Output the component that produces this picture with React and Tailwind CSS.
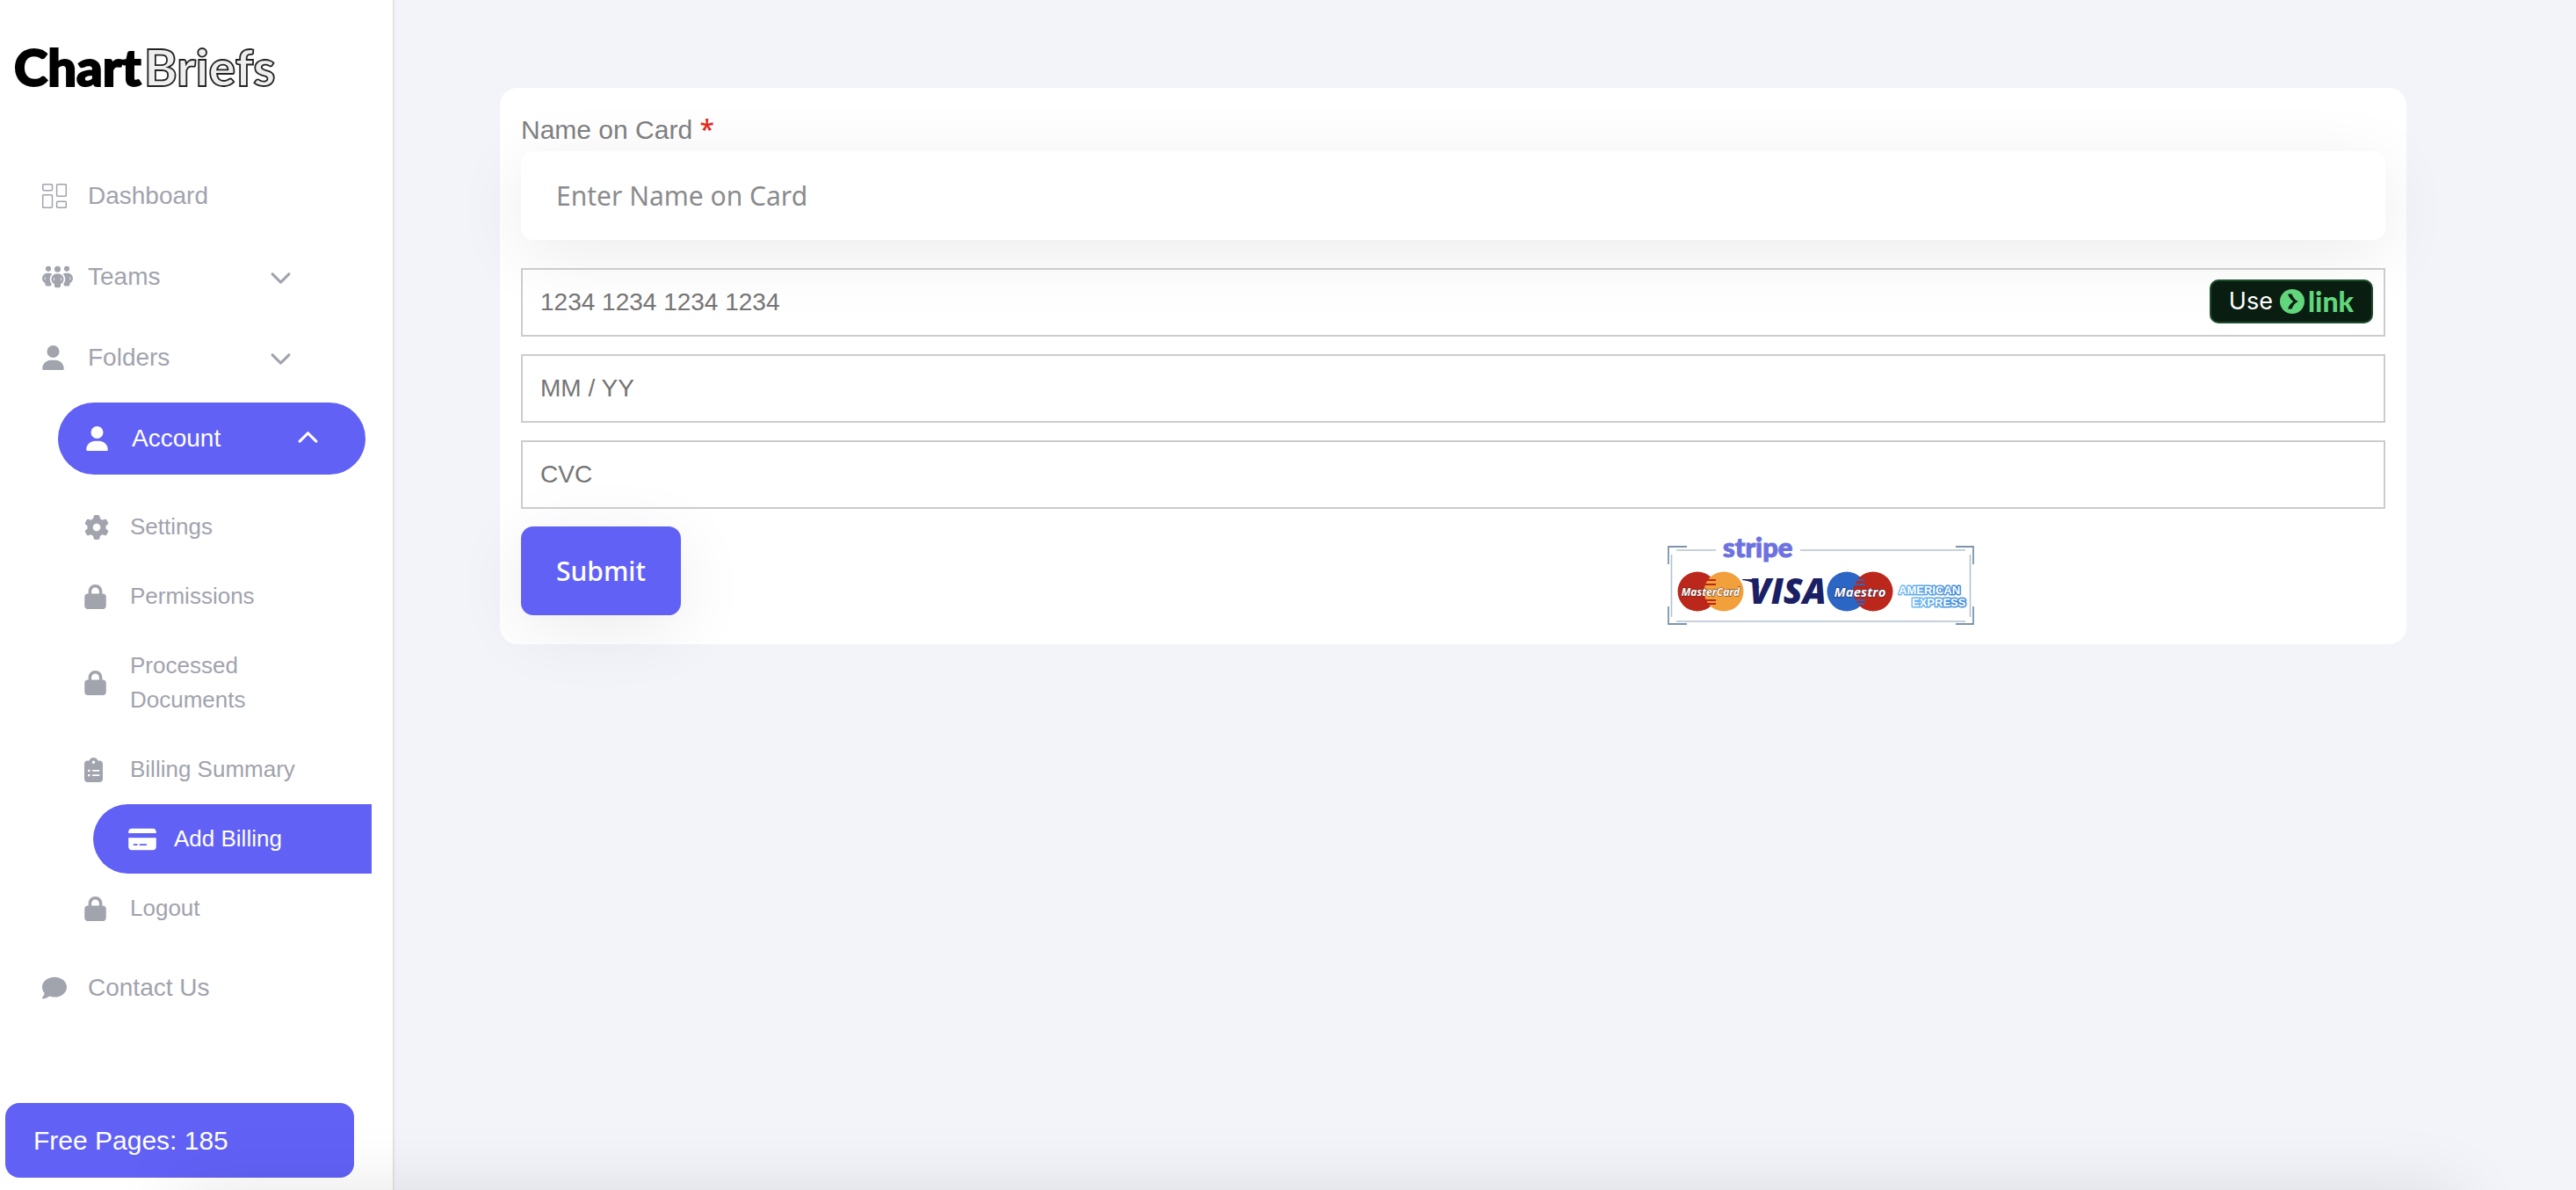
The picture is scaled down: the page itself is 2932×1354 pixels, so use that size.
import React, { useState } from 'react';
import {
  FaPeopleGroup, FaUser, FaGear, FaLock, FaClipboardList,
  FaCreditCard, FaComment, FaChevronDown, FaChevronUp,
} from 'react-icons/fa6';

const DashboardIcon = ({ className }) => (
  <svg viewBox="0 0 28 28" fill="none" stroke="currentColor" strokeWidth="1.5" className={className}>
    <rect x="0.7" y="0.7" width="10.8" height="7" rx="1.2" />
    <rect x="0.7" y="12.7" width="10.8" height="14.6" rx="1.2" />
    <rect x="16.6" y="0.7" width="10.7" height="13.6" rx="1.2" />
    <rect x="16.6" y="20.3" width="10.7" height="7" rx="1.2" />
  </svg>
);

const ACCOUNT_LINKS = [
  { label: 'Settings',            icon: FaGear,          size: 'w-7' },
  { label: 'Permissions',         icon: FaLock,          size: 'w-[25px]' },
  { label: 'Processed Documents', icon: FaLock,          size: 'w-[25px]' },
  { label: 'Billing Summary',     icon: FaClipboardList, size: 'w-[21px]' },
  { label: 'Add Billing',         icon: FaCreditCard,    size: 'w-8', active: true },
  { label: 'Logout',              icon: FaLock,          size: 'w-[25px]' },
];

function Logo() {
  return (
    <svg viewBox="0 0 310 60" className="w-[310px] h-[60px] overflow-visible" role="img" aria-label="ChartBriefs">
      <g fontFamily="Lato, sans-serif" fontWeight="900" fontSize="57">
        <text x="0" y="50" fontSize="58" fill="#000" stroke="#000" strokeWidth="2">Chart</text>
        <text x="148" y="50" fill="#eee" stroke="#222" strokeWidth="1.8">Briefs</text>
      </g>
    </svg>
  );
}

function NavItem({ icon: Icon, size, label, chevron }) {
  return (
    <a href="#" className="flex items-center h-[82px] pl-12 pr-[115px] text-[28px] text-[#a1a3ad]">
      <span className="w-[52px] shrink-0"><Icon className={`h-7 ${size}`} /></span>
      <span className="grow">{label}</span>
      {chevron && <FaChevronDown className="h-7 w-[25px]" />}
    </a>
  );
}

function SubItem({ icon: Icon, size, label, active }) {
  return (
    <li>
      <a
        href="#"
        className={`flex items-center py-5 text-[26px] leading-[39px] ${
          active
            ? 'ml-[106px] mr-6 pl-10 rounded-l-full bg-[#6161f6] text-white'
            : 'pl-24 pr-[90px] text-[#a1a3ad]'
        }`}
      >
        <span className="w-[52px] shrink-0"><Icon className={`h-7 ${size}`} /></span>
        <span>{label}</span>
      </a>
    </li>
  );
}

function Sidebar() {
  return (
    <aside className="w-[449px] shrink-0 flex flex-col bg-white border-r-2 border-[#e2e2e4]">
      <div className="pl-4 pt-12 pb-[74px]"><Logo /></div>

      <nav className="flex flex-col gap-[10px]">
        <NavItem icon={DashboardIcon} size="w-7" label="Dashboard" />
        <NavItem icon={FaPeopleGroup} size="w-[35px]" label="Teams" chevron />
        <NavItem icon={FaUser} size="w-[25px]" label="Folders" chevron />
        <div>
          <button className="flex items-center h-[82px] w-[350px] ml-[66px] mb-5 pl-8 pr-[53px] rounded-full bg-[#6161f6] text-white text-[28px]">
            <span className="w-[52px] shrink-0"><FaUser className="h-7 w-[25px]" /></span>
            <span className="grow text-left">Account</span>
            <FaChevronUp className="h-7 w-[25px]" />
          </button>
          <ul>
            {ACCOUNT_LINKS.map(link => <SubItem key={link.label} {...link} />)}
          </ul>
        </div>
        <NavItem icon={FaComment} size="w-7" label="Contact Us" />
      </nav>

      <div className="mt-auto mb-[14px] ml-[6px] mr-11 px-8 py-5 rounded-2xl bg-[#6161f6] text-white text-[30px] leading-[45px]">
        Free Pages: 185
      </div>
    </aside>
  );
}

function LinkButton() {
  return (
    <button
      type="button"
      className="absolute right-[14px] top-[13px] flex items-center h-[50px] px-5 rounded-[10px] border-2 border-[#1e4d2b] bg-[#0a1d11] font-[Inter,sans-serif] text-[27px] text-white"
    >
      Use
      <svg viewBox="0 0 28 28" className="w-7 h-7 ml-2 mr-1">
        <circle cx="14" cy="14" r="14" fill="#62d67c" />
        <path d="M9 5.5h4.6c.9 3.6 3.5 6.6 7.2 8.5-3.7 1.9-6.3 4.9-7.2 8.5H9c1.2-3.5 3.4-6.5 6.3-8.5C12.4 12 10.2 9 9 5.5z" fill="#0a1d11" />
      </svg>
      <span className="font-[Lato,sans-serif] font-black text-[32px] leading-8 text-[#62d67c]">link</span>
    </button>
  );
}

function StripeField({ label, placeholder, children }) {
  return (
    <div className="relative">
      <input
        type="text"
        aria-label={label}
        placeholder={placeholder}
        className="block w-full h-[78px] px-5 border-2 border-[#ccc] bg-transparent text-[28px] placeholder:text-[#757575] outline-none"
      />
      {children}
    </div>
  );
}

// Stripe + accepted cards badge
function CardBrands() {
  return (
    <svg viewBox="0 0 350 104" className="w-[350px] h-[104px] overflow-visible" role="img" aria-label="Powered by Stripe">
      <defs>
        <linearGradient id="amex" x1="0" x2="1">
          <stop offset="0" stopColor="#6db9f5" />
          <stop offset="1" stopColor="#3f86d2" />
        </linearGradient>
      </defs>
      <g fill="none" stroke="#7d95ac" strokeWidth="1.8">
        <path d="M1 33V13h21M328 13h20v20M1 81v20h21M328 101h20V81" />
      </g>
      <g fill="none" stroke="#b4c2d0" strokeWidth="1.6">
        <path d="M10 17h45M151 17h188M10 98h329M4.5 22v71M344.5 22v71" />
      </g>
      <text x="63" y="25" fontFamily="Lato, sans-serif" fontWeight="900" fontSize="31" fill="#6c72e0" stroke="#6c72e0" strokeWidth="1">stripe</text>

      <circle cx="34" cy="64" r="22.5" fill="#bb271a" />
      <circle cx="64" cy="64" r="22.5" fill="#f2a03b" />
      <path d="M45 51h10M43 56h12M43 74h12M45 78h10" stroke="#bb271a" strokeWidth="2" />
      <text x="49" y="69" textAnchor="middle" fontFamily="'Noto Sans', sans-serif" fontWeight="700" fontStyle="italic" fontSize="12" fill="#fff" stroke="#3b1a12" strokeWidth="0.8" paintOrder="stroke">MasterCard</text>

      <text x="93" y="78" fontFamily="'Open Sans', sans-serif" fontWeight="800" fontStyle="italic" fontSize="40" fill="#1a1f66">VISA</text>
      <path d="M85 50h15l5 10C99 54 93 52 85 51z" fill="#1a1f66" />

      <circle cx="204" cy="64" r="22.5" fill="#2c66c4" />
      <circle cx="234" cy="64" r="22.5" fill="#bb271a" />
      <path d="M214 51h10M213 56h12M213 74h12M214 78h10" stroke="#2c66c4" strokeWidth="2" />
      <text x="219" y="70" textAnchor="middle" fontFamily="'Open Sans', sans-serif" fontWeight="700" fontStyle="italic" fontSize="15" fill="#fff" stroke="#1c2450" strokeWidth="1" paintOrder="stroke">Maestro</text>

      <g fontFamily="'Liberation Sans', sans-serif" fontWeight="700" fontSize="13" fill="#fff" stroke="url(#amex)" strokeWidth="3" paintOrder="stroke" strokeLinejoin="round">
        <text x="263" y="67">AMERICAN</text>
        <text x="278" y="81">EXPRESS</text>
      </g>
    </svg>
  );
}

export default function App() {
  const [name, setName] = useState('');

  return (
    <div className="flex min-h-screen bg-[#f3f4fa] font-['Liberation_Sans',Arial,sans-serif]">
      <Sidebar />

      <main className="grow pt-[100px] pl-[120px] pr-[193px]">
        <form onSubmit={e => e.preventDefault()} className="flex flex-col rounded-[20px] bg-white px-6 pt-6 pb-5">
          <label htmlFor="card-name" className="text-[30px] leading-[48px] text-[#808183]">
            Name on Card <span className="font-['Noto_Sans',sans-serif] font-medium leading-none text-[#e02b1d]">*</span>
          </label>
          <input
            id="card-name"
            type="text"
            value={name}
            onChange={e => setName(e.target.value)}
            placeholder="Enter Name on Card"
            className="h-[101px] px-10 rounded-[14px] bg-white shadow-[0_16px_80px_rgba(0,0,0,0.08)] font-['Noto_Sans',sans-serif] text-[30px] placeholder:text-[#8a8b8d] outline-none"
          />

          <div className="flex flex-col gap-5 mt-8 mb-5">
            <StripeField label="Card number" placeholder="1234 1234 1234 1234">
              <LinkButton />
            </StripeField>
            <StripeField label="Expiry date" placeholder="MM / YY" />
            <StripeField label="CVC" placeholder="CVC" />
          </div>

          <div className="flex items-start">
            <div className="w-[61.5%]">
              <button
                type="submit"
                className="h-[101px] px-10 rounded-[14px] bg-[#6161f6] shadow-[0_16px_80px_rgba(0,0,0,0.08)] font-['Noto_Sans',sans-serif] font-medium text-[30px] text-white"
              >
                Submit
              </button>
            </div>
            <div className="pt-[10px]"><CardBrands /></div>
          </div>
        </form>
      </main>

      {/* Soft shade along the bottom edge of the window */}
      <div className="fixed -bottom-20 left-[200px] right-[132px] h-20 pointer-events-none shadow-[0_0_80px_rgba(0,0,0,0.1)]" />
    </div>
  );
}
